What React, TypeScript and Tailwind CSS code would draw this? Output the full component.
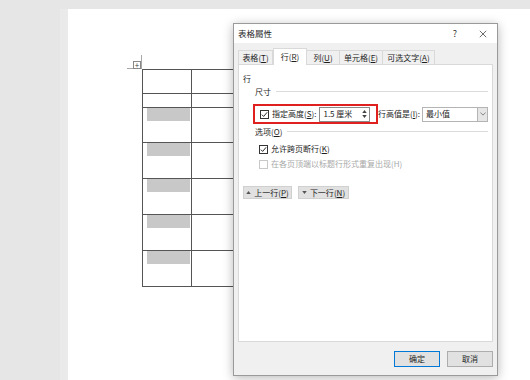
import React from "react";

const rows = [24, 14, 35, 36, 36, 36, 36];

function Check({ checked = false, disabled = false }: { checked?: boolean; disabled?: boolean }) {
  return (
    <div
      className={
        disabled
          ? "w-[9px] h-[9px] border border-[#c8c8c8] bg-white shrink-0"
          : "w-[9px] h-[9px] border border-[#333] bg-white shrink-0 flex items-center justify-center"
      }
    >
      {checked && (
        <svg viewBox="0 0 8 8" className="w-[7px] h-[7px]">
          <path d="M1 4.2 L3 6.2 L7 1.5" fill="none" stroke="#222" strokeWidth="1.1" />
        </svg>
      )}
    </div>
  );
}

function Key({ k }: { k: string }) {
  return (
    <>
      (<span className="underline underline-offset-1">{k}</span>)
    </>
  );
}

function Tab({ label, k, active = false }: { label: string; k: string; active?: boolean }) {
  return (
    <div
      className={
        active
          ? "h-[17px] -mb-[1px] bg-white border border-b-0 border-[#d9d9d9] flex items-center justify-center relative z-10"
          : "h-[14px] bg-[#f0f0f0] border border-b-0 border-l-0 border-[#d9d9d9] flex items-center justify-center"
      }
    >
      <span>
        {label}
        <Key k={k} />
      </span>
    </div>
  );
}

function Section({ title, k }: { title: string; k?: string }) {
  return (
    <div className="h-[11px] flex items-center ml-[16px] mr-[4px]">
      <span className="leading-none">
        {title}
        {k && <Key k={k} />}
      </span>
      <div className="flex-1 h-px bg-[#dcdcdc] ml-[5px]" />
    </div>
  );
}

export default function App() {
  return (
    <div className="w-[530px] h-[380px] bg-[#e6e6e6] flex flex-col overflow-hidden relative font-['Noto_Sans_CJK_SC','Microsoft_YaHei',sans-serif] text-[8px] text-[#1e1e1e]">
      <div className="h-[9px] shrink-0" />
      <div className="flex flex-1">
        <div className="w-[60px]" />
        <div className="w-[8px] bg-[#eaeaea]" />
        <div className="flex-1 bg-white pl-[59px] pt-[46px] flex flex-col">
          <div className="w-[15px] h-[14px] border-r border-b border-[#a8a8a8] flex items-end justify-end">
            <div className="w-[8px] h-[8px] border border-[#888] bg-white text-[8px] leading-none flex items-center justify-center text-[#444] mb-[-1px]">
              +
            </div>
          </div>
          <div className="ml-[15px] w-[130px] border-t border-l border-[#555]">
            {rows.map((h, i) => (
              <div key={i} className="flex border-b border-[#555]" style={{ height: h }}>
                <div className="w-[49px] border-r border-[#555] pl-[4px]">
                  {i >= 2 && <div className="w-[43px] h-[13px] bg-[#c8c8c8]" />}
                </div>
                <div className="flex-1" />
              </div>
            ))}
          </div>
        </div>
      </div>

      {/* dialog */}
      <div className="absolute left-[233px] top-[23px] w-[265px] h-[353px] border border-[#9a9a9a] bg-[#f0f0f0] flex flex-col shadow-[0_2px_10px_rgba(0,0,0,0.28)]">
        <div className="h-[19px] bg-white flex items-center pl-[4px] shrink-0">
          <span className="text-[8.5px]">表格屬性</span>
          <div className="flex-1" />
          <span className="text-[9px] text-[#333] mr-[22px]">?</span>
          <svg viewBox="0 0 10 10" className="w-[8px] h-[8px] mr-[10px]">
            <path d="M1 1 L9 9 M9 1 L1 9" stroke="#333" strokeWidth="0.9" />
          </svg>
        </div>

        <div className="flex-1 flex flex-col pt-[5px] px-[4px]">
          <div className="h-[16px] flex items-end">
            <div className="w-[35px] h-[14px] bg-[#f0f0f0] border border-b-0 border-[#d9d9d9] flex items-center justify-center">
              <span>
                表格<Key k="T" />
              </span>
            </div>
            <div className="w-[34px]">
              <Tab label="行" k="R" active />
            </div>
            <div className="w-[33px]">
              <Tab label="列" k="U" />
            </div>
            <div className="w-[43px]">
              <Tab label="单元格" k="E" />
            </div>
            <div className="w-[52px]">
              <Tab label="可选文字" k="A" />
            </div>
          </div>

          <div className="flex-1 bg-white border border-[#d9d9d9] flex flex-col pt-[8px]">
            <div className="h-[11px] ml-[4px] flex items-center leading-none">行</div>
            <div className="mt-[2px]">
              <Section title="尺寸" />
            </div>

            <div className="mt-[7px] flex items-center ml-[14px]">
              <div className="w-[125px] h-[20px] border-2 border-[#e0201f] flex items-center pl-[5px]">
                <Check checked />
                <span className="ml-[3px] whitespace-nowrap">
                  指定高度<Key k="S" />:
                </span>
                <div className="ml-[3px] w-[51px] h-[15px] border border-[#8a8a8a] bg-white flex items-center">
                  <span className="pl-[3px] flex-1 whitespace-nowrap">1.5 厘米</span>
                  <div className="w-[7px] h-full flex flex-col items-center justify-center gap-[2px] mr-[1px]">
                    <svg viewBox="0 0 6 4" className="w-[5px] h-[3px]">
                      <path d="M0 4 L3 0 L6 4 Z" fill="#444" />
                    </svg>
                    <svg viewBox="0 0 6 4" className="w-[5px] h-[3px]">
                      <path d="M0 0 L6 0 L3 4 Z" fill="#444" />
                    </svg>
                  </div>
                </div>
              </div>
              <span className="whitespace-nowrap">
                行高值是<Key k="I" />:
              </span>
              <div className="ml-[2px] w-[66px] h-[15px] border border-[#b4b4b4] bg-white flex items-center">
                <span className="pl-[3px] flex-1">最小值</span>
                <div className="w-[10px] h-full bg-[#e6e6e6] border-l border-[#b4b4b4] flex items-center justify-center">
                  <svg viewBox="0 0 8 5" className="w-[6px] h-[4px]">
                    <path d="M0.5 0.5 L4 4 L7.5 0.5" fill="none" stroke="#555" strokeWidth="0.9" />
                  </svg>
                </div>
              </div>
            </div>

            <div className="mt-[2px]">
              <Section title="选项" k="O" />
            </div>

            <div className="mt-[6px] h-[12px] ml-[20px] flex items-center">
              <Check checked />
              <span className="ml-[3px]">
                允许跨页断行<Key k="K" />
              </span>
            </div>
            <div className="mt-[3px] h-[12px] ml-[20px] flex items-center text-[#a8a8a8]">
              <Check disabled />
              <span className="ml-[3px]">
                在各页顶端以标题行形式重复出现(H)
              </span>
            </div>

            <div className="mt-[16px] ml-[4px] flex gap-[6px]">
              <div className="w-[49px] h-[13px] bg-[#e1e1e1] border border-[#d0d0d0] flex items-center justify-center gap-[3px]">
                <svg viewBox="0 0 6 4" className="w-[5px] h-[3px]">
                  <path d="M0 4 L3 0 L6 4 Z" fill="#555" />
                </svg>
                <span>
                  上一行<Key k="P" />
                </span>
              </div>
              <div className="w-[51px] h-[13px] bg-[#e1e1e1] border border-[#d0d0d0] flex items-center justify-center gap-[3px]">
                <svg viewBox="0 0 6 4" className="w-[5px] h-[3px]">
                  <path d="M0 0 L6 0 L3 4 Z" fill="#555" />
                </svg>
                <span>
                  下一行<Key k="N" />
                </span>
              </div>
            </div>
          </div>

          <div className="pt-[9px] pb-[8px] flex justify-end gap-[7px]">
            <div className="w-[46px] h-[16px] bg-[#e1e1e1] border border-[#0078d7] flex items-center justify-center">
              确定
            </div>
            <div className="w-[46px] h-[16px] bg-[#e1e1e1] border border-[#adadad] flex items-center justify-center">
              取消
            </div>
          </div>
        </div>
      </div>
    </div>
  );
}
